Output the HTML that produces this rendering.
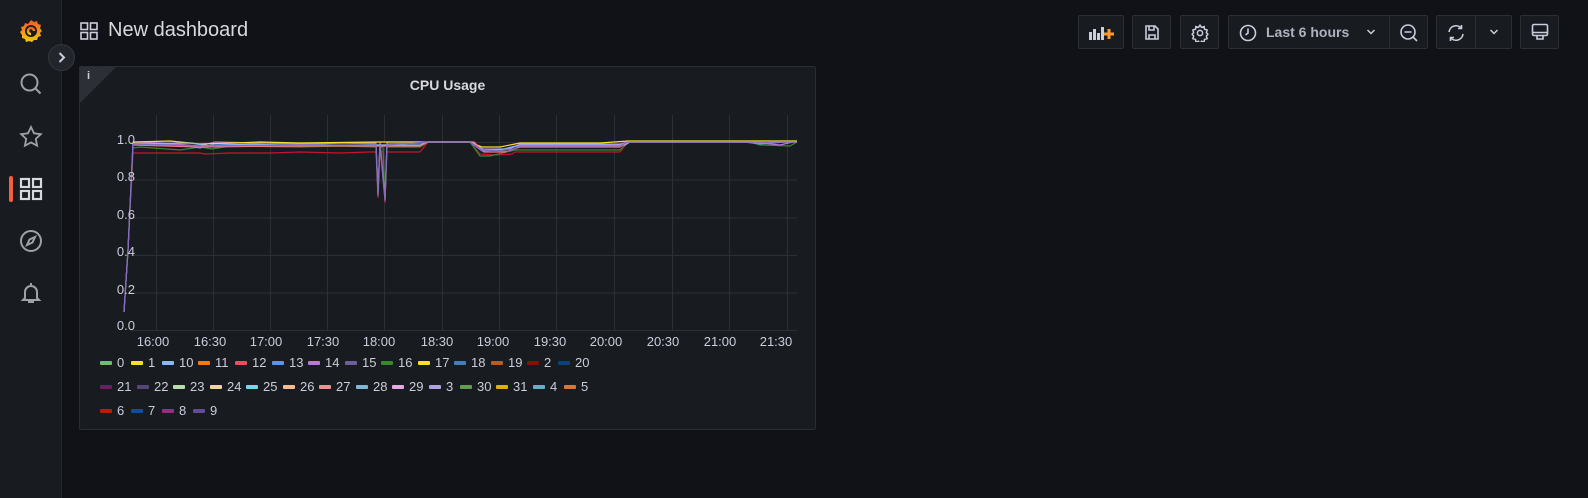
<!DOCTYPE html>
<html><head><meta charset="utf-8"><style>
*{margin:0;padding:0;box-sizing:border-box}
body{width:1588px;height:498px;background:#111217;font-family:"Liberation Sans",sans-serif;color:#ccccdc;position:relative;overflow:hidden}
.side{position:absolute;left:0;top:0;width:62px;height:498px;background:#181b1f;border-right:1px solid #25272d}
.btn{position:absolute;top:15px;height:34px;border:1px solid #2c2e35;background:#181b1f;border-radius:2px}
.ic{position:absolute}
.lg{position:absolute;font-size:13px;color:#ccccdc;display:flex;align-items:center;white-space:nowrap}
.lg i{display:inline-block;width:12px;height:4px;margin-right:5px;border-radius:1px}
</style></head><body>
<div class="side">
<svg class="ic" style="left:18px;top:17px" width="26" height="28" viewBox="0 0 26 28"><defs><linearGradient id="g" x1="0" y1="1" x2="0" y2="0"><stop offset="0" stop-color="#f2cc0c"/><stop offset="1" stop-color="#f05a28"/></linearGradient></defs><path d="M13 3l3 2 3-1 1 3 3 1-1 3 2 3-2 2 1 3-3 1-1 3-3 0-2 2-3-1-3 1-1-3-3-1 0-3-2-3 2-2-1-3 3-1 1-3 3 1z" fill="url(#g)"/><circle cx="13" cy="14" r="6" fill="#181b1f"/><path d="M13 17a3 3 0 1 1 3-3" stroke="url(#g)" stroke-width="2.5" fill="none"/></svg>
<div style="position:absolute;left:48px;top:44px;width:27px;height:27px;border-radius:50%;background:#22252b;border:1px solid #34373d"><svg width="25" height="25" viewBox="0 0 25 25"><path d="M10.5 8l4.5 4.5-4.5 4.5" stroke="#ccccdc" stroke-width="2" fill="none"/></svg></div>
<svg class="ic" style="left:19px;top:72px" width="24" height="24" viewBox="0 0 24 24" fill="none" stroke="#9fa1a6" stroke-width="2"><circle cx="10.5" cy="10.5" r="8"/><path d="M16.5 16.5l5 5"/></svg>
<svg class="ic" style="left:19px;top:125px" width="24" height="24" viewBox="0 0 24 24" fill="none" stroke="#9fa1a6" stroke-width="1.8"><path d="M12 2l3 6.3 6.8.9-5 4.7 1.3 6.8L12 17.4 5.9 20.7l1.3-6.8-5-4.7 6.8-.9z"/></svg>
<div style="position:absolute;left:9px;top:176px;width:4px;height:26px;background:#f55f3e;border-radius:2px"></div>
<svg class="ic" style="left:19px;top:177px" width="24" height="24" viewBox="0 0 24 24" fill="none" stroke="#d8d9de" stroke-width="2.2"><rect x="2" y="2" width="8" height="8"/><rect x="14" y="2" width="8" height="8"/><rect x="2" y="14" width="8" height="8"/><rect x="14" y="14" width="8" height="8"/></svg>
<svg class="ic" style="left:19px;top:229px" width="24" height="24" viewBox="0 0 24 24" fill="none" stroke="#9fa1a6" stroke-width="2"><circle cx="12" cy="12" r="10"/><path d="M16 8l-2.5 5.5L8 16l2.5-5.5z"/></svg>
<svg class="ic" style="left:20px;top:281px" width="22" height="24" viewBox="0 0 22 24" fill="none" stroke="#9fa1a6" stroke-width="2"><path d="M11 2v2M5 17V11a6 6 0 0 1 12 0v6l2 2H3z M8 21h6"/></svg>
</div>
<svg class="ic" style="left:80px;top:22px" width="18" height="18" viewBox="0 0 18 18" fill="none" stroke="#ccccdc" stroke-width="1.6"><rect x="1" y="1" width="6.5" height="6.5"/><rect x="10.5" y="1" width="6.5" height="6.5"/><rect x="1" y="10.5" width="6.5" height="6.5"/><rect x="10.5" y="10.5" width="6.5" height="6.5"/></svg>
<div style="position:absolute;left:108px;top:19px;font-size:20px;color:#d8d9de">New dashboard</div>

<div class="btn" style="left:1078px;width:46px"><svg style="position:absolute;left:10px;top:9px" width="26" height="16" viewBox="0 0 26 16"><rect x="0" y="7" width="3" height="8" fill="#ccccdc"/><rect x="4" y="4" width="3" height="11" fill="#ccccdc"/><rect x="8" y="8" width="3" height="7" fill="#ccccdc"/><rect x="12" y="2" width="3" height="13" fill="#ccccdc"/><path d="M20 4v10M15 9h10" stroke="#ff9830" stroke-width="3"/></svg></div>
<div class="btn" style="left:1132px;width:39px"><svg style="position:absolute;left:11px;top:8px" width="16" height="17" viewBox="0 0 16 17" fill="none" stroke="#ccccdc" stroke-width="1.6"><path d="M2 2h9l3 3v10H2z M5 2v4h5V2 M5 15v-4h6v4"/></svg></div>
<div class="btn" style="left:1180px;width:39px"><svg style="position:absolute;left:10px;top:8px" width="18" height="18" viewBox="0 0 24 24" fill="none" stroke="#ccccdc" stroke-width="2"><circle cx="12" cy="12" r="3.5"/><path d="M12 1.5l2 3 3.5-1 .5 3.5 3.5 1-1 3.5 2 2-2 2.5 1 3.5-3.5 1-.5 3.5-3.5-1-2 3-2-3-3.5 1-.5-3.5-3.5-1 1-3.5-2-2.5 2-2-1-3.5 3.5-1 .5-3.5 3.5 1z"/></svg></div>
<div class="btn" style="left:1228px;width:200px"><svg style="position:absolute;left:10px;top:8px" width="18" height="18" viewBox="0 0 18 18" fill="none" stroke="#ccccdc" stroke-width="1.6"><circle cx="9" cy="9" r="7.5"/><path d="M9 4.5V9l-2.5 2"/></svg><span style="position:absolute;left:37px;top:8px;font-size:14px;color:#ccccdc;font-weight:bold;opacity:.85">Last 6 hours</span><svg style="position:absolute;left:137px;top:12px" width="10" height="8" viewBox="0 0 10 8"><path d="M1.5 2l3.5 3.5L8.5 2" stroke="#ccccdc" stroke-width="1.5" fill="none"/></svg><div style="position:absolute;left:160px;top:0;width:1px;height:32px;background:#2c2e35"></div><svg style="position:absolute;left:170px;top:7px" width="20" height="20" viewBox="0 0 20 20" fill="none" stroke="#ccccdc" stroke-width="1.6"><circle cx="9" cy="9" r="7"/><path d="M14 14l4 4M5.5 9h7"/></svg></div>
<div class="btn" style="left:1436px;width:76px"><svg style="position:absolute;left:9px;top:8px" width="20" height="18" viewBox="0 0 20 18" fill="none" stroke="#ccccdc" stroke-width="1.6"><path d="M3 8a7 7 0 0 1 12.5-3.5M17 10a7 7 0 0 1-12.5 3.5 M15.5 1v3.5H12 M4.5 17v-3.5H8"/></svg><div style="position:absolute;left:38px;top:0;width:1px;height:32px;background:#2c2e35"></div><svg style="position:absolute;left:52px;top:12px" width="10" height="8" viewBox="0 0 10 8"><path d="M1.5 2l3.5 3.5L8.5 2" stroke="#ccccdc" stroke-width="1.5" fill="none"/></svg></div>
<div class="btn" style="left:1520px;width:39px"><svg style="position:absolute;left:10px;top:7px" width="18" height="19" viewBox="0 0 18 19" fill="none" stroke="#ccccdc" stroke-width="1.6"><rect x="1.5" y="1.5" width="15" height="11" rx="1.5"/><path d="M1.5 9.5h15M6 13v3h6v-3"/></svg></div>

<div style="position:absolute;left:79px;top:66px;width:737px;height:364px;background:#181b1f;border:1px solid #2a2d33;border-radius:2px">
<div style="position:absolute;left:0;top:0;width:0;height:0;border-top:36px solid #2c2f35;border-right:36px solid transparent"></div>
<div style="position:absolute;left:7px;top:3px;font-size:11px;font-weight:bold;color:#ccccdc">i</div>
<div style="position:absolute;left:0;width:735px;top:10px;text-align:center;font-size:14px;font-weight:bold;color:#d8d9de">CPU Usage</div>
</div>

<svg style="position:absolute;left:0;top:0" width="1588" height="498">
<g stroke="#2c2f35" stroke-width="1">
<path d="M130 142.5H797M130 180H797M130 218H797M130 255.5H797M130 293H797M130 330.5H797"/>
<path d="M156.5 115V330M213.5 115V330M270.5 115V330M327.5 115V330M384.5 115V330M442.5 115V330M499.5 115V330M556.5 115V330M614.5 115V330M672.5 115V330M729.5 115V330M787.5 115V330"/>
</g>
<g fill="none" stroke-width="1.2">
<polyline stroke="#c4162a" points="124,312 128,250 133,153 200,153 205,154 230,153 270,153 300,152 340,153 370,152 376,152 378,198 380,152 383,152 385,203 387,152 420,152 428,142 470,142 480,154 495,155 512,154 515,152 620,152 628,142 797,142"/>
<polyline stroke="#37872d" points="124,312 128,250 133,148 140,147 180,150 200,147 212,149 230,146 300,147 340,146 376,147 378,195 380,147 383,147 385,200 387,147 420,147 428,142 470,142 480,156 490,156 515,150 620,150 628,142 750,142 760,145 790,146 797,142"/>
<polyline stroke="#5794f2" points="124,312 128,250 133,143 180,145 200,148 215,144 300,145 340,143 376,144 378,193 380,144 385,199 387,144 425,143 430,142 470,142 482,151 500,150 515,146 560,146 620,145 628,142 745,142 760,144 797,141"/>
<polyline stroke="#b877d9" points="124,312 128,250 133,142 160,143 200,146 215,142 260,143 300,144 340,143 376,143 378,190 380,142 385,196 387,142 430,142 470,142 480,149 510,149 520,144 620,144 628,142 740,142 760,143 780,145 797,141"/>
<polyline stroke="#fade2a" points="133,142 170,141 200,144 260,142 300,143 376,142 382,142 430,142 470,142 482,147 500,147 520,143 600,143 628,141 797,141"/>
<polyline stroke="#8ab8ff" points="133,144 190,143 210,146 250,144 300,146 376,145 387,145 420,145 428,142 472,142 484,150 505,149 520,145 625,145 630,142 797,142"/>
<polyline stroke="#ff7383" points="133,145 200,147 300,146 376,146 387,146 420,146 428,142 474,142 484,152 505,152 520,147 620,147 628,142 797,142"/>
<polyline stroke="#806eb7" points="124,312 128,250 133,144 200,146 300,145 376,145 378,196 380,145 385,201 387,145 426,142 470,142 482,150 510,151 520,146 620,146 628,142 797,142"/>
</g>
<g font-family="Liberation Sans" font-size="13" fill="#ccccdc" text-anchor="end">
<text x="135" y="144">1.0</text><text x="135" y="181">0.8</text><text x="135" y="219">0.6</text><text x="135" y="256">0.4</text><text x="135" y="294">0.2</text><text x="135" y="330">0.0</text>
</g>
<g font-family="Liberation Sans" font-size="13" fill="#ccccdc" text-anchor="middle">
<text x="153" y="346">16:00</text><text x="210" y="346">16:30</text><text x="266" y="346">17:00</text><text x="323" y="346">17:30</text><text x="379" y="346">18:00</text><text x="437" y="346">18:30</text><text x="493" y="346">19:00</text><text x="550" y="346">19:30</text><text x="606" y="346">20:00</text><text x="663" y="346">20:30</text><text x="720" y="346">21:00</text><text x="776" y="346">21:30</text>
</g>
</svg>

<div class="lg" style="left:100px;top:355px"><i style="background:#73bf69"></i>0</div>
<div class="lg" style="left:131px;top:355px"><i style="background:#fade2a"></i>1</div>
<div class="lg" style="left:162px;top:355px"><i style="background:#8ab8ff"></i>10</div>
<div class="lg" style="left:198px;top:355px"><i style="background:#ff780a"></i>11</div>
<div class="lg" style="left:235px;top:355px"><i style="background:#f2495c"></i>12</div>
<div class="lg" style="left:272px;top:355px"><i style="background:#5794f2"></i>13</div>
<div class="lg" style="left:308px;top:355px"><i style="background:#b877d9"></i>14</div>
<div class="lg" style="left:345px;top:355px"><i style="background:#705da0"></i>15</div>
<div class="lg" style="left:381px;top:355px"><i style="background:#37872d"></i>16</div>
<div class="lg" style="left:418px;top:355px"><i style="background:#fade2a"></i>17</div>
<div class="lg" style="left:454px;top:355px"><i style="background:#447ebc"></i>18</div>
<div class="lg" style="left:491px;top:355px"><i style="background:#c15c17"></i>19</div>
<div class="lg" style="left:527px;top:355px"><i style="background:#890f02"></i>2</div>
<div class="lg" style="left:558px;top:355px"><i style="background:#0a437c"></i>20</div>
<div class="lg" style="left:100px;top:379px"><i style="background:#6d1f62"></i>21</div>
<div class="lg" style="left:137px;top:379px"><i style="background:#584477"></i>22</div>
<div class="lg" style="left:173px;top:379px"><i style="background:#b7dbab"></i>23</div>
<div class="lg" style="left:210px;top:379px"><i style="background:#f4d598"></i>24</div>
<div class="lg" style="left:246px;top:379px"><i style="background:#70dbed"></i>25</div>
<div class="lg" style="left:283px;top:379px"><i style="background:#f9ba8f"></i>26</div>
<div class="lg" style="left:319px;top:379px"><i style="background:#f29191"></i>27</div>
<div class="lg" style="left:356px;top:379px"><i style="background:#82b5d8"></i>28</div>
<div class="lg" style="left:392px;top:379px"><i style="background:#e5a8e2"></i>29</div>
<div class="lg" style="left:429px;top:379px"><i style="background:#aea2e0"></i>3</div>
<div class="lg" style="left:460px;top:379px"><i style="background:#629e51"></i>30</div>
<div class="lg" style="left:496px;top:379px"><i style="background:#e5ac0e"></i>31</div>
<div class="lg" style="left:533px;top:379px"><i style="background:#64b0c8"></i>4</div>
<div class="lg" style="left:564px;top:379px"><i style="background:#e0752d"></i>5</div>
<div class="lg" style="left:100px;top:403px"><i style="background:#bf1b00"></i>6</div>
<div class="lg" style="left:131px;top:403px"><i style="background:#0a50a1"></i>7</div>
<div class="lg" style="left:162px;top:403px"><i style="background:#962d82"></i>8</div>
<div class="lg" style="left:193px;top:403px"><i style="background:#614d93"></i>9</div>
</body></html>
